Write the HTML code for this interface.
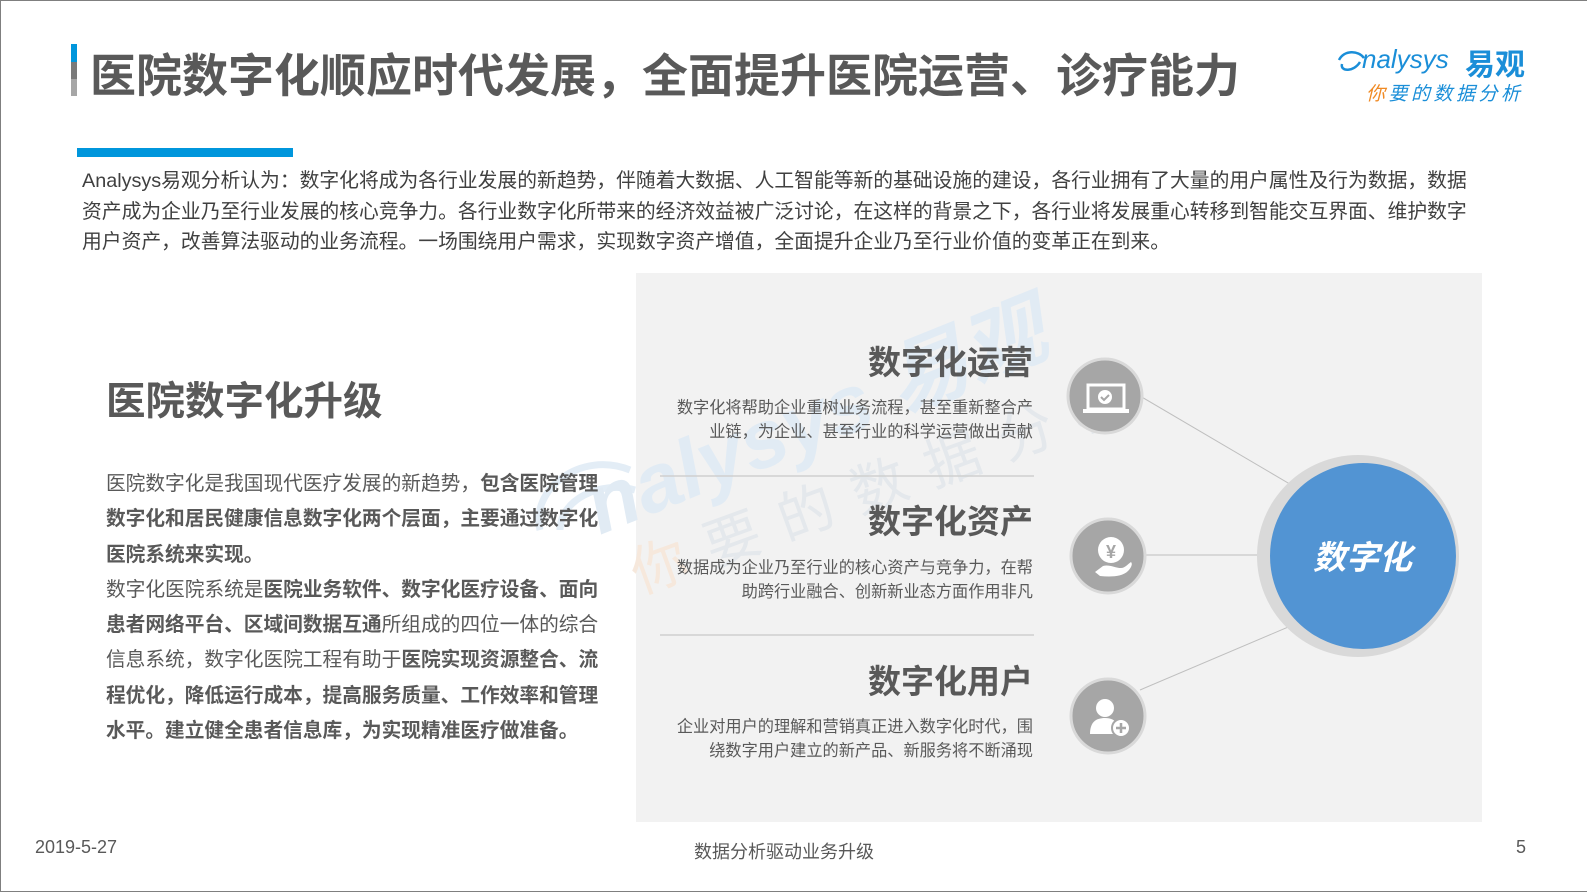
<!DOCTYPE html>
<html><head><meta charset="utf-8">
<style>
*{margin:0;padding:0;box-sizing:border-box}
body{width:1587px;height:892px;background:#fff;position:relative;overflow:hidden;font-family:"Liberation Sans","Noto Sans CJK SC",sans-serif;color:#595959}
.frame{position:absolute;left:0;top:0;width:1587px;height:892px;border:1px solid #7f7f7f;border-right:none}
.abs{position:absolute}
.t{position:absolute;white-space:nowrap}
</style></head><body>
<div class="frame"></div>
<div class="abs" style="left:636px;top:273px;width:846px;height:549px;background:#f2f2f2"></div>
<!-- watermark -->
<svg class="abs" style="left:520px;top:430px" width="140" height="110"><path d="M20 100 C10 60,60 20,110 40 M40 100 C40 70,80 50,115 60" stroke="#e3edf6" stroke-width="7" fill="none"/></svg>
<div class="t" style="left:600px;top:440px;font-size:82px;font-style:italic;font-weight:bold;color:#e1ebf4;transform:rotate(-22deg);transform-origin:0 80%">nalysys 易观</div>
<div class="t" style="left:640px;top:530px;font-size:56px;color:#e4e8ec;transform:rotate(-20deg);transform-origin:0 80%;letter-spacing:22px"><span style="color:#f6e8dc">你</span>要的数据分析</div>

<div class="abs" style="left:71px;top:44px;width:6px;height:18px;background:#0096dc"></div>
<div class="abs" style="left:71px;top:62px;width:6px;height:17px;background:#7a7a7a"></div>
<div class="abs" style="left:71px;top:79px;width:6px;height:17px;background:#a6a6a6"></div>
<div class="t" style="left:90px;top:40px;font-size:46px;font-weight:bold;color:#595959">医院数字化顺应时代发展，全面提升医院运营、诊疗能力</div>
<div class="abs" style="left:77px;top:148px;width:216px;height:9px;background:#0096dc"></div>

<svg class="abs" style="left:1336px;top:42px" width="40" height="34" viewBox="0 0 40 34"><path d="M3 18 C8 8,22 8,28 16 M6 22 C4 30,18 30,24 20" stroke="#1a8ed8" stroke-width="2.5" fill="none"/></svg>
<div class="t" style="left:1362px;top:44px;font-size:26px;font-style:italic;color:#1a8ed8">nalysys</div>
<div class="t" style="left:1465px;top:40px;font-size:30px;font-weight:bold;color:#1a8ed8">易观</div>
<div class="t" style="left:1366px;top:79px;font-size:19px;font-style:italic;color:#1a8ed8;letter-spacing:3.5px"><span style="color:#f08a24">你</span>要的数据分析</div>

<div class="abs" style="left:82px;top:166px;white-space:nowrap;font-size:19.8px;line-height:30.5px;color:#404040">Analysys易观分析认为：数字化将成为各行业发展的新趋势，伴随着大数据、人工智能等新的基础设施的建设，各行业拥有了大量的用户属性及行为数据，数据<br>资产成为企业乃至行业发展的核心竞争力。各行业数字化所带来的经济效益被广泛讨论，在这样的背景之下，各行业将发展重心转移到智能交互界面、维护数字<br>用户资产，改善算法驱动的业务流程。一场围绕用户需求，实现数字资产增值，全面提升企业乃至行业价值的变革正在到来。</div>

<div class="t" style="left:106px;top:370px;font-size:39.5px;font-weight:bold;color:#595959">医院数字化升级</div>
<div class="abs" style="left:106px;top:467px;width:500px;font-size:19.7px;line-height:35.3px;color:#595959">医院数字化是我国现代医疗发展的新趋势，<b>包含医院管理数字化和居民健康信息数字化两个层面，主要通过数字化医院系统来实现。</b><br>数字化医院系统是<b>医院业务软件、数字化医疗设备、面向患者网络平台、区域间数据互通</b>所组成的四位一体的综合信息系统，数字化医院工程有助于<b>医院实现资源整合、流程优化，降低运行成本，提高服务质量、工作效率和管理水平。建立健全患者信息库，为实现精准医疗做准备。</b></div>

<svg class="abs" style="left:0;top:0" width="1587" height="892">
  <line x1="1140" y1="396" x2="1300" y2="490" stroke="#bfbfbf" stroke-width="1"/>
  <line x1="1145" y1="555" x2="1270" y2="555" stroke="#bfbfbf" stroke-width="1"/>
  <line x1="1140" y1="690" x2="1300" y2="622" stroke="#bfbfbf" stroke-width="1"/>
  <line x1="660" y1="476" x2="1034" y2="476" stroke="#cfcfcf" stroke-width="1.5"/>
  <line x1="660" y1="635" x2="1034" y2="635" stroke="#cfcfcf" stroke-width="1.5"/>
  <circle cx="1358" cy="556" r="101" fill="#d9d9d9"/>
  <circle cx="1363" cy="556" r="93" fill="#5294d3"/>
  <g fill="#a6a6a6" stroke="#d9d9d9" stroke-width="3">
    <circle cx="1105" cy="396" r="37"/>
    <circle cx="1108" cy="556" r="37"/>
    <circle cx="1108" cy="716" r="37"/>
  </g>
  <g fill="none" stroke="#fff" stroke-width="3">
    <rect x="1088" y="385" width="36" height="24"/>
  </g>
  <rect x="1083" y="409" width="46" height="4" fill="#fff"/>
  <circle cx="1105" cy="397" r="7" fill="#fff"/>
  <path d="M1101 397 l3 3 l5 -5" stroke="#a6a6a6" stroke-width="2" fill="none"/>
  <circle cx="1111" cy="550" r="13" fill="#fff"/>
  <text x="1111" y="558" font-size="18" font-weight="bold" fill="#a6a6a6" text-anchor="middle" font-family="Liberation Sans">¥</text>
  <path d="M1100 576 l-5 -4 l8 -6 c6 -2 12 2 18 2 c4 0 7 -4 10 -6 c2 2 0 6 -3 9 c-6 6 -18 6 -28 5z" fill="#fff"/>
  <circle cx="1105" cy="708" r="9" fill="#fff"/>
  <path d="M1090 734 c0 -12 6 -16 15 -16 c6 0 10 2 12 6 l0 10z" fill="#fff"/>
  <circle cx="1121" cy="728" r="9" fill="#fff" stroke="#a6a6a6" stroke-width="2"/>
  <path d="M1121 723 v10 M1116 728 h10" stroke="#a6a6a6" stroke-width="2.5"/>
</svg>
<div class="t" style="left:1313px;top:531px;font-size:33px;font-weight:bold;font-style:italic;color:#fff">数字化</div>

<div class="t" style="right:554px;top:336px;font-size:33px;font-weight:bold;color:#595959">数字化运营</div>
<div class="abs" style="right:554px;top:396px;width:400px;text-align:right;font-size:16.2px;line-height:24px;color:#595959">数字化将帮助企业重树业务流程，甚至重新整合产<br>业链，为企业、甚至行业的科学运营做出贡献</div>
<div class="t" style="right:554px;top:495px;font-size:33px;font-weight:bold;color:#595959">数字化资产</div>
<div class="abs" style="right:554px;top:556px;width:400px;text-align:right;font-size:16.2px;line-height:24px;color:#595959">数据成为企业乃至行业的核心资产与竞争力，在帮<br>助跨行业融合、创新新业态方面作用非凡</div>
<div class="t" style="right:554px;top:655px;font-size:33px;font-weight:bold;color:#595959">数字化用户</div>
<div class="abs" style="right:554px;top:715px;width:400px;text-align:right;font-size:16.2px;line-height:24px;color:#595959">企业对用户的理解和营销真正进入数字化时代，围<br>绕数字用户建立的新产品、新服务将不断涌现</div>

<div class="t" style="left:35px;top:837px;font-size:18px;color:#595959">2019-5-27</div>
<div class="t" style="left:694px;top:838px;font-size:18px;color:#595959">数据分析驱动业务升级</div>
<div class="t" style="left:1516px;top:837px;font-size:18px;color:#595959">5</div>
</body></html>
